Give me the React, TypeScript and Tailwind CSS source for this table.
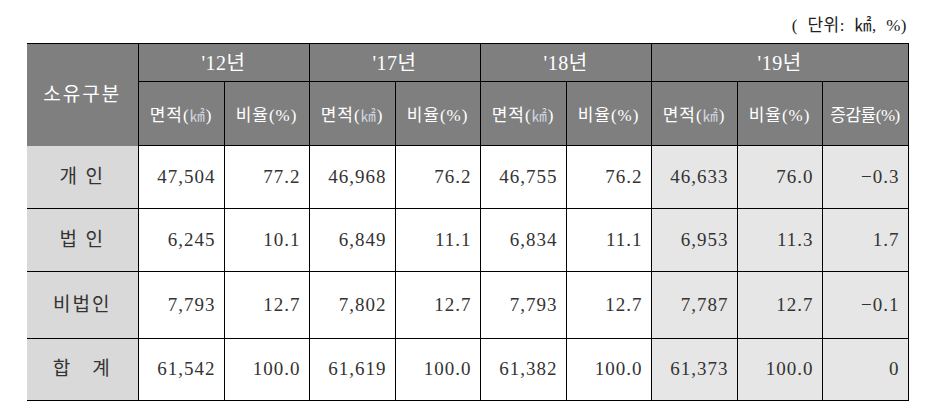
const years = ["'12년", "'17년", "'18년"];

const rows = [
  { label: "개 인", v: ["47,504", "77.2", "46,968", "76.2", "46,755", "76.2", "46,633", "76.0", "−0.3"], h: "h-[63px]" },
  { label: "법 인", v: ["6,245", "10.1", "6,849", "11.1", "6,834", "11.1", "6,953", "11.3", "1.7"], h: "h-[63px]" },
  { label: "비법인", v: ["7,793", "12.7", "7,802", "12.7", "7,793", "12.7", "7,787", "12.7", "−0.1"], h: "h-[67px]" },
  { label: "합\u00a0\u00a0\u00a0계", v: ["61,542", "100.0", "61,619", "100.0", "61,382", "100.0", "61,373", "100.0", "0"], h: "h-[62px]" },
];

const font = "font-['Liberation_Serif','Noto_Sans_CJK_KR',serif]";

export default function App() {
  return (
    <div className={`w-[935px] h-[416px] bg-white ${font}`}>
      <div className="w-[907px] pt-[16px] h-[43px] text-right text-[17px] leading-[20px] text-[#222] whitespace-pre tracking-[0.5px]">
        {"(  단위:  ㎢,  %)"}
      </div>
      <table className="ml-[27px] border-collapse table-fixed w-[880px]">
        <colgroup>
          <col className="w-[111px]" />
          {Array.from({ length: 9 }).map((_, i) => (
            <col key={i} className={i % 2 === 0 ? "w-[86px]" : "w-[85px]"} />
          ))}
        </colgroup>
        <thead className="bg-[#7f7f7f] text-white">
          <tr className="h-[38px]">
            <th rowSpan={2} className="border-t border-black border-r text-[19px] font-normal tracking-[2px]">
              소유구분
            </th>
            {years.map((y) => (
              <th key={y} colSpan={2} className="border border-black text-[20px] font-normal tracking-[0.5px]">
                {y}
              </th>
            ))}
            <th colSpan={3} className="border border-black text-[20px] font-normal tracking-[0.5px]">
              '19년
            </th>
          </tr>
          <tr className="h-[64px]">
            {[0, 1, 2, 3].map((i) => (
              <>
                <th key={`a${i}`} className="border border-black text-[17px] font-normal whitespace-nowrap pt-[4px] tracking-[1px]">
                  면적(<span className="text-[15px] text-[#cfd6e0]">㎢</span>)
                </th>
                <th key={`b${i}`} className="border border-black text-[17px] font-normal whitespace-nowrap pt-[4px] tracking-[1px]">
                  비율(%)
                </th>
              </>
            ))}
            <th className="border border-black text-[17px] font-normal whitespace-nowrap pt-[4px] tracking-[-0.5px]">
              증감률(%)
            </th>
          </tr>
        </thead>
        <tbody className="text-[#333]">
          {rows.map((r) => (
            <tr key={r.label} className={r.h}>
              <td className="bg-[#d9d9d9] border-b border-r border-black text-center text-[19px] tracking-[2px]">
                {r.label}
              </td>
              {r.v.map((v, i) => (
                <td
                  key={i}
                  className={`border border-black text-right pr-[8px] text-[19px] tracking-[1px] ${i >= 6 ? "bg-[#e6e6e6]" : "bg-white"}`}
                >
                  {v}
                </td>
              ))}
            </tr>
          ))}
        </tbody>
      </table>
    </div>
  );
}
